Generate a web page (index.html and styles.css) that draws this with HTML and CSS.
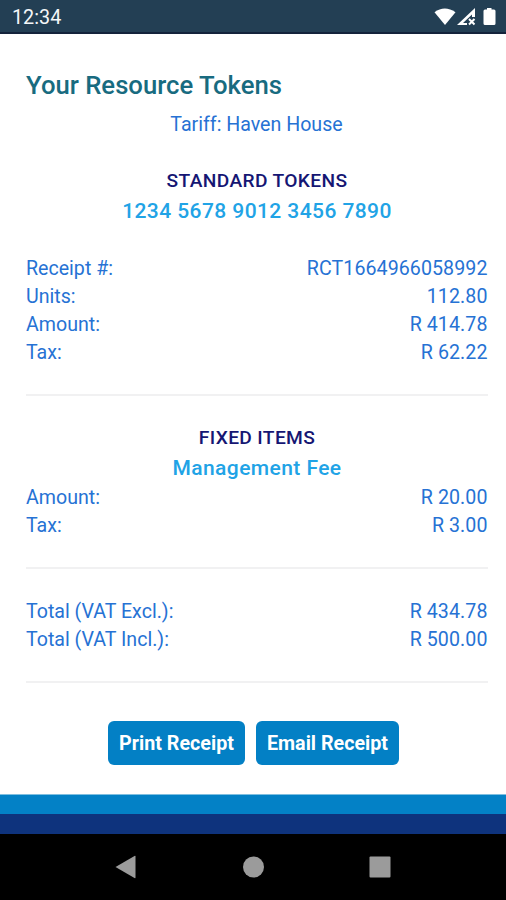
FILE: index.html
```html
<!DOCTYPE html>
<html lang="en">
<head>
<meta charset="utf-8">
<title>Your Resource Tokens</title>
<link rel="stylesheet" href="styles.css">
</head>
<body>
<header class="status">
  <span>12:34</span>
  <svg class="status-icons" width="64" height="20" viewBox="0 0 64 20">
    <path d="M.5 4.2Q10.600-3.200 21.500 4.200L11 17Z" transform="translate(0 1)"/>
    <path fill-rule="evenodd" d="M41 1V10H38V7.500L29 16H33V18H23Z"/>
    <path class="cross" d="M35 12L40.500 17.500M40.500 12L35 17.500"/>
    <path d="M53 1h4.500v1.500H60q1.500 0 1.500 1.500v12.500q0 1.500-1.500 1.500h-9q-1.500 0-1.500-1.500V4q0-1.500 1.500-1.500h2Z"/>
  </svg>
</header>
<main class="receipt">
  <h1 class="title">Your Resource Tokens</h1>
  <p class="tariff">Tariff: Haven House</p>
  <section class="block tokens">
    <h2 class="caption">STANDARD TOKENS</h2>
    <p class="code">1234 5678 9012 3456 7890</p>
    <dl class="rows">
      <div class="row"><dt>Receipt #:</dt><dd>RCT1664966058992</dd></div>
      <div class="row"><dt>Units:</dt><dd>112.80</dd></div>
      <div class="row"><dt>Amount:</dt><dd>R 414.78</dd></div>
      <div class="row"><dt>Tax:</dt><dd>R 62.22</dd></div>
    </dl>
  </section>
  <section class="block fixed">
    <h2 class="caption">FIXED ITEMS</h2>
    <p class="code">Management Fee</p>
    <dl class="rows">
      <div class="row"><dt>Amount:</dt><dd>R 20.00</dd></div>
      <div class="row"><dt>Tax:</dt><dd>R 3.00</dd></div>
    </dl>
  </section>
  <section class="block totals">
    <dl class="rows">
      <div class="row"><dt>Total (VAT Excl.):</dt><dd>R 434.78</dd></div>
      <div class="row"><dt>Total (VAT Incl.):</dt><dd>R 500.00</dd></div>
    </dl>
  </section>
  <div class="actions">
    <button class="btn print">Print Receipt</button>
    <button class="btn email">Email Receipt</button>
  </div>
</main>
<div class="band light"></div>
<div class="band dark"></div>
<nav class="nav">
  <svg width="22" height="24" viewBox="0 0 22 24"><path d="M.5 12L19.500 1Q20.500 .5 20.500 1.500V22.500Q20.500 23.500 19.500 23Z"/></svg>
  <svg width="22" height="24" viewBox="0 0 22 24"><circle cx="11.500" cy="12" r="10.500"/></svg>
  <svg width="22" height="24" viewBox="0 0 22 24"><rect x=".5" y="1.500" width="21" height="21" rx="1"/></svg>
</nav>
</body>
</html>
```
FILE: styles.css
```css
* { box-sizing: border-box; margin: 0; padding: 0; }
body {
  width: 506px;
  height: 900px;
  display: flex;
  flex-direction: column;
  overflow: hidden;
  background: #fff;
  font-family: Roboto, "Liberation Sans", sans-serif;
  font-size: 19.6px;
  line-height: 28.2px;
  color: #2672d4;
}
.status {
  height: 34px;
  flex: none;
  display: flex;
  justify-content: space-between;
  align-items: center;
  padding: 0 8px 0 12px;
  background: #233f54;
  border-bottom: 2px solid #14233b;
  color: #f4f6f8;
  font-size: 19.800px;
}
.status > span { padding-top: 5px; }
.status-icons { fill: #fff; margin-top: 2px; }
.cross { stroke: #fff; stroke-width: 2; }
.receipt { height: 760px; flex: none; padding: 36px 18px 0 26px; }
.title { font-size: 25.700px; line-height: 30px; font-weight: 500; color: #186b80; }
.tariff { width: 461px; margin-top: 11px; text-align: center; }
.block { border-bottom: 2px solid #f1f1f2; }
.tokens { height: 230px; margin-top: 27px; padding-top: 1px; }
.caption { font-size: 19.200px; line-height: 28px; letter-spacing: .35px; font-weight: 500; text-align: center; color: #151673; }
.code { font-size: 21px; line-height: 30px; letter-spacing: .42px; margin-top: 1px; font-weight: 500; text-align: center; color: #21a3e6; }
.tokens .rows { margin-top: 28.500px; }
.fixed .rows { margin-top: .5px; }
.row { display: flex; justify-content: space-between; }
.row dd { padding-right: .5px; letter-spacing: .08px; }
.fixed { height: 173px; padding-top: 28px; }
.totals { height: 114px; padding-top: 29px; }
.actions { display: flex; gap: 11px; margin: 38px 0 0 82px; }
.btn {
  height: 44px;
  border: 0;
  border-radius: 6px;
  background: #0380c5;
  color: #fff;
  font: 700 19.700px Roboto, "Liberation Sans", sans-serif;
}
.print { width: 137px; }
.email { width: 143px; }
.band { height: 20px; flex: none; }
.light { background: #0381c6; border-top: 1px solid #7fbfe0; }
.dark { background: #0e337d; }
.nav {
  flex: 1;
  display: flex;
  justify-content: space-between;
  padding: 21px 115px 0;
  background: #000;
  fill: #9b9b9b;
}
```
